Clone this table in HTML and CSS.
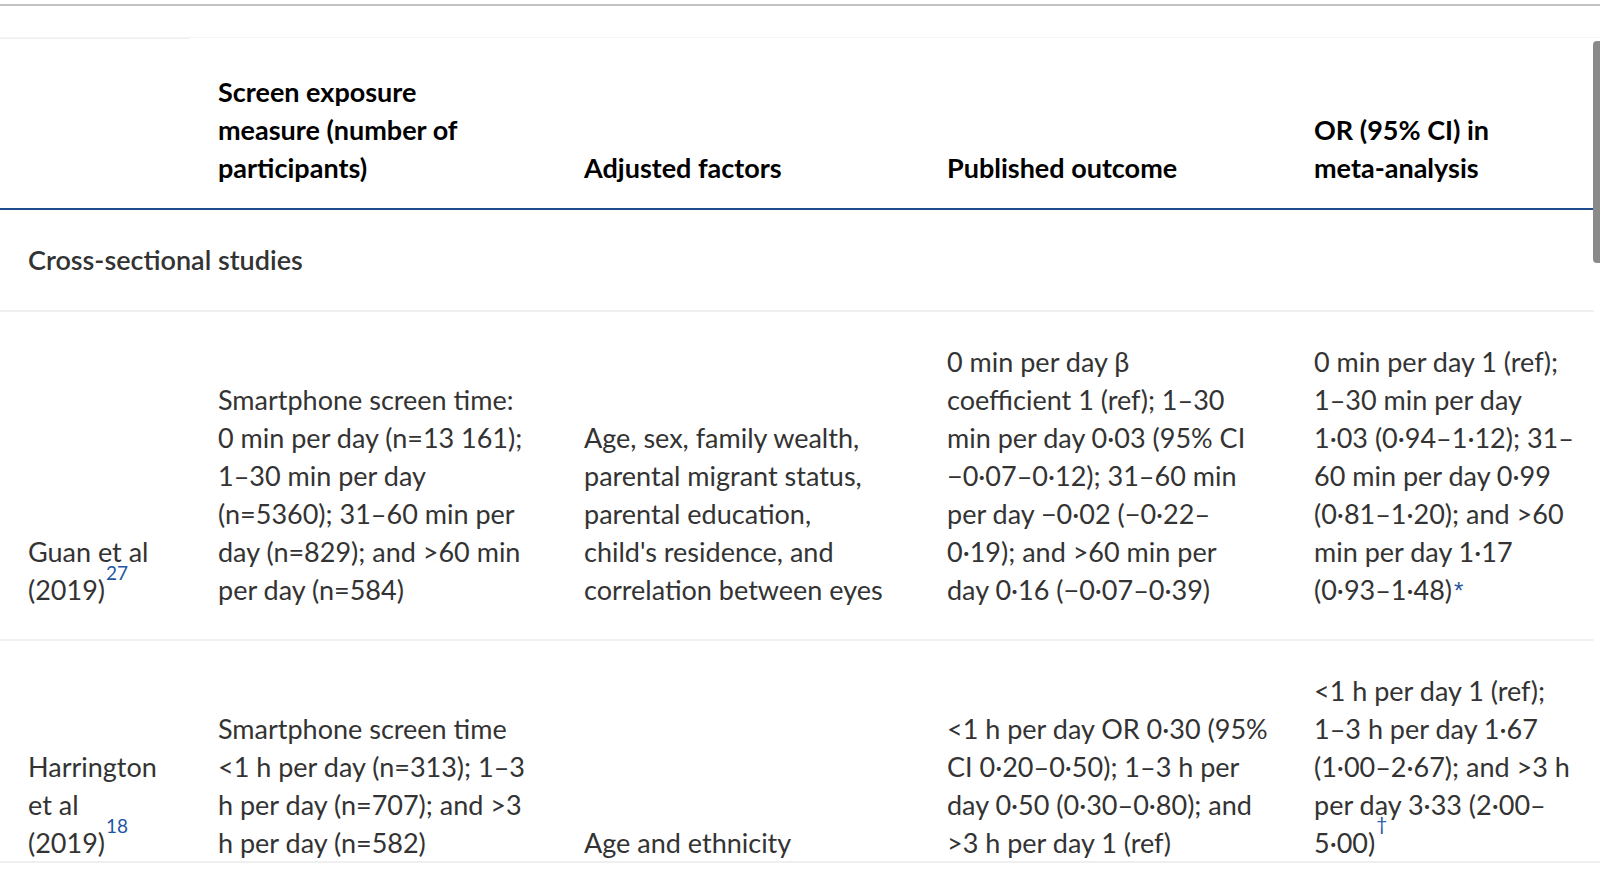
FILE: index.html
```html
<!DOCTYPE html>
<html lang="en">
<head>
<meta charset="utf-8">
<title>Screen exposure studies</title>
<link rel="stylesheet" href="styles.css">
</head>
<body>
<div class="topbar"></div>
<div class="table-wrap">
  <table class="data">
    <colgroup>
      <col class="w1"><col class="w2"><col class="w3"><col class="w4"><col class="w5">
    </colgroup>
    <thead>
      <tr>
        <th class="first"></th>
        <th>Screen exposure<br>measure (number of<br>participants)</th>
        <th>Adjusted factors</th>
        <th>Published outcome</th>
        <th>OR (95% CI) in<br>meta-analysis</th>
      </tr>
    </thead>
    <tbody>
      <tr class="section">
        <td colspan="5">Cross-sectional studies</td>
      </tr>
      <tr>
        <td>Guan et al<br>(2019)<sup class="ref">27</sup></td>
        <td>Smartphone screen time:<br>0 min per day (n=13&#8239;161);<br>1–30 min per day<br>(n=5360); 31–60 min per<br>day (n=829); and &gt;60 min<br>per day (n=584)</td>
        <td>Age, sex, family wealth,<br>parental migrant status,<br>parental education,<br>child's residence, and<br>correlation between eyes</td>
        <td>0 min per day β<br>coefficient 1 (ref); 1–30<br>min per day 0·03 (95% CI<br>−0·07–0·12); 31–60 min<br>per day −0·02 (−0·22–<br>0·19); and &gt;60 min per<br>day 0·16 (−0·07–0·39)</td>
        <td>0 min per day 1 (ref);<br>1–30 min per day<br>1·03 (0·94–1·12); 31–<br>60 min per day 0·99<br>(0·81–1·20); and &gt;60<br>min per day 1·17<br>(0·93–1·48)<sup class="ref star">*</sup></td>
      </tr>
      <tr>
        <td>Harrington<br>et al<br>(2019)<sup class="ref">18</sup></td>
        <td>Smartphone screen time<br>&lt;1 h per day (n=313); 1–3<br>h per day (n=707); and &gt;3<br>h per day (n=582)</td>
        <td>Age and ethnicity</td>
        <td>&lt;1 h per day OR 0·30 (95%<br>CI 0·20–0·50); 1–3 h per<br>day 0·50 (0·30–0·80); and<br>&gt;3 h per day 1 (ref)</td>
        <td>&lt;1 h per day 1 (ref);<br>1–3 h per day 1·67<br>(1·00–2·67); and &gt;3 h<br>per day 3·33 (2·00–<br>5·00)<sup class="ref dagger">†</sup></td>
      </tr>
    </tbody>
  </table>
  <div class="scroll-thumb"></div>
</div>
</body>
</html>
```

FILE: styles.css
```css
html, body {
  margin: 0;
  padding: 0;
  background: #ffffff;
}

body {
  font-family: Lato, "Liberation Sans", sans-serif;
  font-size: 27px;
  line-height: 38px;
  color: #333333;
}

.topbar {
  height: 4px;
  border-bottom: 2px solid #c2c2c2;
  margin-bottom: 31px;
}

.table-wrap {
  position: relative;
  height: 823px;
  overflow: hidden;
  border-top: 1px solid #f6f6f6;
  border-bottom: 2px solid #efefef;
}

.data {
  width: 1594px;
  table-layout: fixed;
  border-collapse: collapse;
}

.w1 { width: 190px; }
.w2 { width: 366px; }
.w3 { width: 363px; }
.w4 { width: 367px; }
.w5 { width: 308px; }

.data th,
.data td {
  white-space: nowrap;
}

.data th {
  text-align: left;
  vertical-align: bottom;
  font-weight: 700;
  color: #000000;
  padding: 35px 28px 21px;
  border-bottom: 2px solid #1f4b8c;
}

.data th.first {
  box-shadow: inset 0 1px 0 #eeeeee;
}

.data td {
  vertical-align: bottom;
  padding: 31px 28px 30px;
  border-bottom: 2px solid #f0f0f0;
}

.data .section td {
  font-weight: 600;
  padding: 31px 28px 31px;
}

.ref {
  font-size: 19px;
  line-height: 0;
  vertical-align: 20px;
  color: #1f56a3;
  margin-left: 1px;
}

.ref.star {
  font-family: "Liberation Sans", Arial, sans-serif;
  font-size: 24px;
  vertical-align: 1px;
  margin-left: 2px;
}

.ref.dagger {
  vertical-align: 22px;
}

.scroll-thumb {
  position: absolute;
  top: 3px;
  right: 0;
  width: 7px;
  height: 222px;
  background: #8a8a8a;
  border-radius: 4px 0 0 4px;
}
```
